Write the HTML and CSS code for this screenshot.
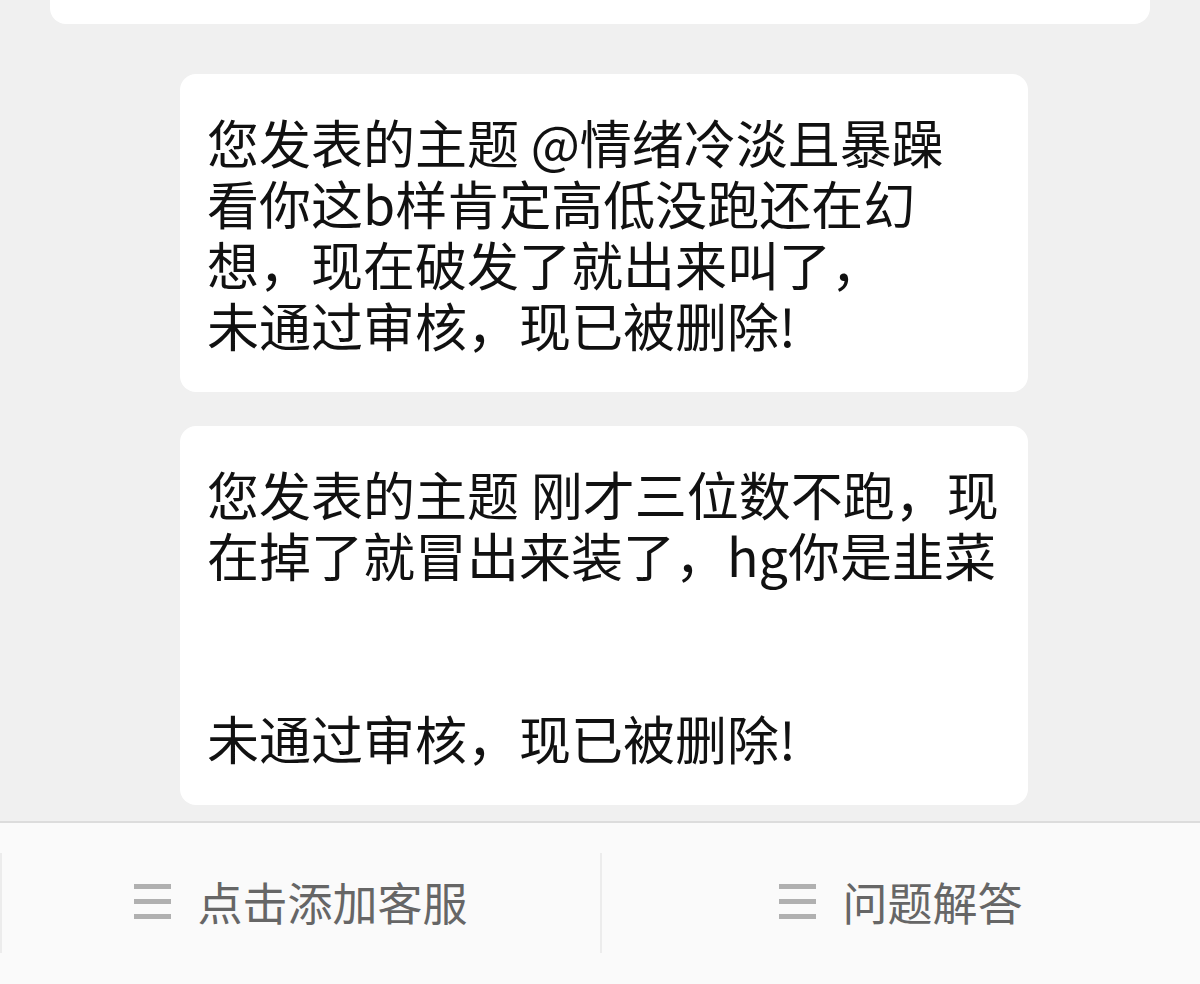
FILE: index.html
```html
<!DOCTYPE html>
<html lang="zh-CN">
<head>
<meta charset="utf-8">
<title>消息</title>
<link rel="stylesheet" href="styles.css">
</head>
<body>
<div class="page">
  <div class="list">
    <div class="card card-top"></div>
    <div class="msg">您发表的主题 @情绪冷淡且暴躁<br>看你这b样肯定高低没跑还在幻<br>想，现在破发了就出来叫了，<br>未通过审核，现已被删除!</div>
    <div class="msg">您发表的主题 刚才三位数不跑，现在掉了就冒出来装了，hg你是韭菜<br><br><br>未通过审核，现已被删除!</div>
  </div>
  <div class="footer">
    <div class="tab">
      <span class="menu-icon"><i></i><i></i><i></i></span>
      <span class="tab-label">点击添加客服</span>
    </div>
    <div class="tab">
      <span class="menu-icon"><i></i><i></i><i></i></span>
      <span class="tab-label">问题解答</span>
    </div>
  </div>
</div>
</body>
</html>
```

FILE: styles.css
```css
* { box-sizing: border-box; }
html, body {
  margin: 0;
  padding: 0;
  height: 100%;
}
body {
  background: #f0f0f0;
  font-family: "Noto Sans CJK SC", "Noto Sans", sans-serif;
  overflow: hidden;
}
.page {
  width: 1200px;
  height: 984px;
  display: flex;
  flex-direction: column;
}
.list {
  flex: 1;
  display: flex;
  flex-direction: column;
  align-items: flex-start;
}
.card-top {
  margin-left: 50px;
  width: 1100px;
  height: 24px;
  background: #fff;
  border-radius: 0 0 16px 16px;
}
.msg {
  margin-left: 180px;
  width: 848px;
  background: #fff;
  border-radius: 16px;
  padding: 37px 28px 37px 27px;
  font-size: 52px;
  line-height: 61px;
  color: #111;
  margin-top: 34px;
}
.card-top + .msg { margin-top: 50px; }
.footer {
  height: 163px;
  background: #fafafa;
  border-top: 2px solid #dcdcdc;
  display: flex;
  padding: 30px 0 31px;
}
.tab {
  flex: 1;
  display: flex;
  align-items: center;
  justify-content: center;
  gap: 26px;
  border-left: 2px solid #ececec;
}
.menu-icon {
  display: flex;
  flex-direction: column;
  gap: 10px;
  width: 37px;
  margin-top: -4px;
}
.menu-icon i {
  display: block;
  height: 5px;
  background: #b0b0b0;
}
.tab-label {
  font-size: 45px;
  color: #666;
  margin-top: -4px;
}
```
